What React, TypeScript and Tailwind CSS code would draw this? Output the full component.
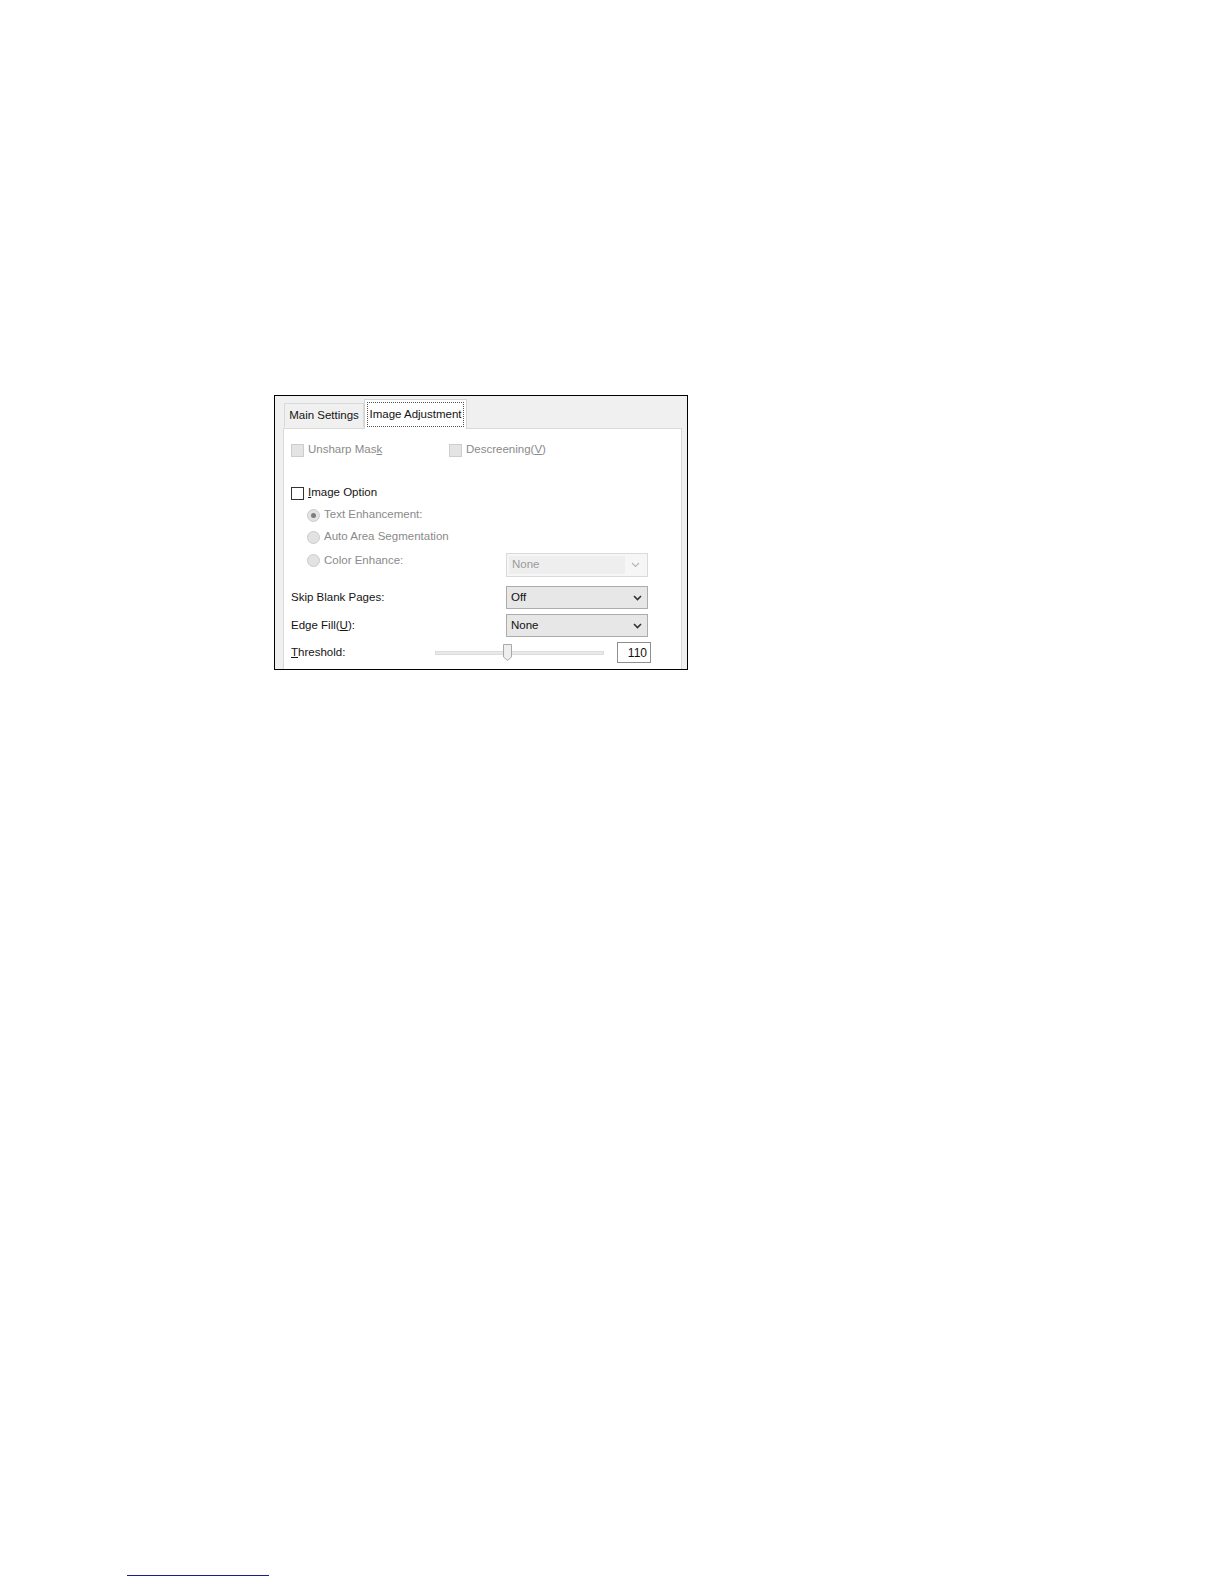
import type { ReactNode } from 'react';

// Small down chevron used by the combo boxes
function Chevron({ disabled = false }: { disabled?: boolean }) {
  return (
    <svg width="9" height="6" viewBox="0 0 9 6" className="shrink-0">
      <path
        d="M1 1 L4.5 4.5 L8 1"
        fill="none"
        stroke={disabled ? '#b5b5b5' : '#333333'}
        strokeWidth={disabled ? 1.1 : 1.6}
      />
    </svg>
  );
}

function CheckBox({ disabled = false }: { disabled?: boolean }) {
  return (
    <div
      className={`w-[13px] h-[13px] shrink-0 border ${
        disabled ? 'border-[#cdcdcd] bg-[#e4e4e4]' : 'border-[#333333] bg-white'
      }`}
    />
  );
}

function Radio({ checked = false }: { checked?: boolean }) {
  return (
    <div className="w-[13px] h-[13px] shrink-0 rounded-full border border-[#cbcbcb] bg-[#e2e2e2] flex items-center justify-center">
      {checked && <div className="w-[5px] h-[5px] rounded-full bg-[#7d7d7d]" />}
    </div>
  );
}

function Combo({ value, disabled = false }: { value: string; disabled?: boolean }) {
  if (disabled) {
    return (
      <div className="w-[142px] h-[24px] border border-[#dadada] bg-[#f6f6f6] flex items-center p-[2px]">
        <div className="flex-1 h-full bg-[#eeeeee] flex items-center pl-[3px] text-[#9b9b9b]">{value}</div>
        <div className="w-[20px] flex justify-center">
          <Chevron disabled />
        </div>
      </div>
    );
  }
  return (
    <div className="w-[142px] h-[23px] border border-[#acacac] bg-[#e7e7e7] flex items-center pl-[4px] pr-[5px] text-[#111111]">
      <span className="flex-1">{value}</span>
      <Chevron />
    </div>
  );
}

function Label({ children, disabled = false }: { children: ReactNode; disabled?: boolean }) {
  return <span className={disabled ? 'text-[#8a8a8a]' : 'text-[#141414]'}>{children}</span>;
}

export default function App() {
  return (
    <div
      className="w-full h-screen bg-white overflow-hidden pt-[395px]"
      style={{ fontFamily: '"Liberation Sans", Arial, sans-serif' }}
    >
      {/* Dialog crop */}
      <div className="ml-[274px] w-[414px] h-[275px] border border-black bg-[#f0f0f0] overflow-hidden text-[11.5px] leading-none">
        {/* Tab strip */}
        <div className="h-[32px] flex items-end pl-[9px]">
          <div className="w-[80px] h-[24px] border border-b-0 border-[#d9d9d9] bg-[#f0f0f0] flex items-center justify-center text-[#141414] mb-px">
            Main Settings
          </div>
          <div className="relative z-10 w-[103px] h-[30px] border border-b-0 border-[#d4d4d4] bg-white p-[2px] -mb-px">
            <div className="w-full h-full border border-dotted border-[#555555] flex items-center justify-center text-[#141414]">
              Image Adjustment
            </div>
          </div>
        </div>

        {/* Tab panel */}
        <div className="ml-[8px] w-[399px] h-[260px] border border-[#d9d9d9] bg-white pl-[7px] pt-[14px]">
          <div className="h-[14px] flex items-center">
            <div className="w-[158px] flex items-center gap-[4px]">
              <CheckBox disabled />
              <Label disabled>
                Unsharp Mas<u>k</u>
              </Label>
            </div>
            <div className="flex items-center gap-[4px]">
              <CheckBox disabled />
              <Label disabled>
                Descreening(<u>V</u>)
              </Label>
            </div>
          </div>

          <div className="mt-[29px] h-[14px] flex items-center gap-[4px]">
            <CheckBox />
            <Label>
              <u>I</u>mage Option
            </Label>
          </div>

          <div className="pl-[16px]">
            <div className="mt-[8px] h-[14px] flex items-center gap-[4px]">
              <Radio checked />
              <Label disabled>Text Enhancement:</Label>
            </div>
            <div className="mt-[8px] h-[14px] flex items-center gap-[4px]">
              <Radio />
              <Label disabled>Auto Area Segmentation</Label>
            </div>
          </div>

          <div className="mt-[9px] flex items-start">
            <div className="w-[215px] pl-[16px] pt-px h-[14px] flex items-center gap-[4px]">
              <Radio />
              <Label disabled>Color Enhance:</Label>
            </div>
            <Combo value="None" disabled />
          </div>

          <div className="mt-[9px] flex items-center">
            <div className="w-[215px]">
              <Label>Skip Blank Pages:</Label>
            </div>
            <Combo value="Off" />
          </div>

          <div className="mt-[5px] flex items-center">
            <div className="w-[215px]">
              <Label>
                Edge Fill(<u>U</u>):
              </Label>
            </div>
            <Combo value="None" />
          </div>

          <div className="mt-[5px] h-[21px] flex items-center">
            <div className="w-[144px]">
              <Label>
                <u>T</u>hreshold:
              </Label>
            </div>
            {/* Slider */}
            <div className="relative w-[169px] h-[21px] flex items-center">
              <div className="w-full h-[4px] border border-[#dcdcdc] bg-[#e9e9e9]" />
              <svg width="11" height="19" viewBox="0 0 11 19" className="absolute left-[67px] top-[1px]">
                <path
                  d="M1.5 1.5 H9.5 V14 L5.5 17.5 L1.5 14 Z"
                  fill="#eeeeee"
                  stroke="#a8a8a8"
                  strokeWidth="1"
                />
              </svg>
            </div>
            <div className="ml-[13px] w-[34px] h-[21px] border border-[#8f8f8f] bg-white flex items-center justify-end pr-[3px] text-[#111111] text-[12px]">
              110
            </div>
          </div>
        </div>
      </div>

      {/* Footnote rule */}
      <div className="mt-[905px] ml-[127px] w-[142px] h-px bg-[#1c1c8c]" />
    </div>
  );
}
